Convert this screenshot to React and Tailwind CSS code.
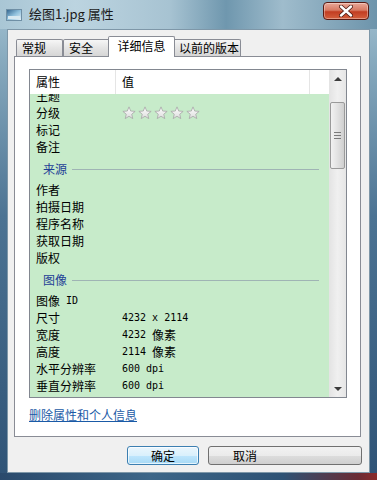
import React from "react";

const cjk = "font-['Noto_Sans_CJK_SC','Noto_Sans',sans-serif]";
const mono = "font-['DejaVu_Sans_Mono',monospace]";

function Star() {
  return (
    <svg width="14" height="14" viewBox="0 0 24 24">
      <defs>
        <linearGradient id="sg" x1="0" y1="0" x2="0" y2="1">
          <stop offset="0" stopColor="#ffffff" />
          <stop offset="1" stopColor="#dcdcdc" />
        </linearGradient>
      </defs>
      <polygon
        points="12,1.5 14.9,8.6 22.5,9.2 16.7,14.1 18.5,21.6 12,17.6 5.5,21.6 7.3,14.1 1.5,9.2 9.1,8.6"
        fill="url(#sg)"
        stroke="#a8a8a8"
        strokeWidth="1.4"
        strokeLinejoin="round"
      />
    </svg>
  );
}

function Row({ label, value, stars }) {
  return (
    <div className="h-[17px] flex items-center">
      <div className="w-[86px] pl-[6px] text-[12px] leading-none text-black">{label}</div>
      <div className="pl-[6px] flex items-center text-black">
        {stars && (
          <div className="flex gap-[2px]">
            <Star />
            <Star />
            <Star />
            <Star />
            <Star />
          </div>
        )}
        {value}
      </div>
    </div>
  );
}

function Section({ title }) {
  return (
    <div className="h-[26px] flex items-center pl-[13px] pr-[10px] pt-[2px]">
      <span className="text-[12px] leading-none text-[#1f3f96]">{title}</span>
      <div className="flex-1 h-px bg-[#9fb4b4] ml-[5px]" />
    </div>
  );
}

function Num({ n, unit }) {
  return (
    <span className="flex items-center">
      <span className={`${mono} text-[10px] leading-none`}>{n}</span>
      {unit && <span className="text-[12px] leading-none ml-[6px]">{unit}</span>}
    </span>
  );
}

function Tab({ label, active, w }) {
  if (active) {
    return (
      <div
        className={`${w} h-[21px] -mb-px -mx-[2px] z-10 bg-white border border-b-0 border-[#898c95] rounded-t-[2px] flex items-center justify-center text-[12px] leading-none pb-[2px]`}
      >
        {label}
      </div>
    );
  }
  return (
    <div
      className={`${w} h-[17px] bg-[linear-gradient(180deg,#f6f6f6,#e4e4e4_50%,#d6d6d6)] border border-b-0 border-[#898c95] rounded-t-[2px] flex items-center pl-[5px] text-[12px] leading-none`}
    >
      {label}
    </div>
  );
}

export default function App() {
  return (
    <div
      className={`${cjk} w-[377px] h-[480px] overflow-hidden flex flex-col bg-[linear-gradient(180deg,#a5c2d2_0%,#88abbf_12%,#4c7393_45%,#2f5376_100%)]`}
    >
      {/* title bar */}
      <div className="h-[29px] flex items-start bg-[linear-gradient(90deg,#a9c6d5_0%,#bcd4e0_20%,#a7c3d2_45%,#6f97ae_60%,#9fbccc_75%,#6d94ab_100%)]">
        <svg className="ml-[6px] mt-[9px]" width="16" height="12" viewBox="0 0 16 12">
          <defs>
            <linearGradient id="ig" x1="0" y1="0" x2="1" y2="1">
              <stop offset="0" stopColor="#2d5f8a" />
              <stop offset="0.5" stopColor="#8fc0dc" />
              <stop offset="1" stopColor="#e9f4fa" />
            </linearGradient>
          </defs>
          <rect x="0.5" y="0.5" width="15" height="11" fill="url(#ig)" stroke="#6f8fa5" />
          <rect x="2" y="7" width="12" height="3" fill="#d7e8f0" />
        </svg>
        <span className="ml-[7px] mt-[6px] text-[13px] leading-[16px] text-[#1b1b1b]">绘图1.jpg 属性</span>
        <div className="ml-auto mr-[8px] mt-[2px] w-[46px] h-[18px] rounded-[4px] border border-[#5a1a12] bg-[linear-gradient(180deg,#e9a898_0%,#d77a63_45%,#c23d22_55%,#d4603e_100%)] flex items-center justify-center shadow-[inset_0_0_0_1px_rgba(255,255,255,0.35)]">
          <svg width="14" height="12" viewBox="0 0 14 12">
            <path d="M2 1.5 L12 10.5 M12 1.5 L2 10.5" stroke="#4a1810" strokeWidth="4" strokeLinecap="round" />
            <path d="M2 1.5 L12 10.5 M12 1.5 L2 10.5" stroke="#ffffff" strokeWidth="2.4" strokeLinecap="round" />
          </svg>
        </div>
      </div>

      {/* client area */}
      <div className="mx-[7px] h-[444px] bg-[#f0f0f0] border border-[#7e97a8] flex flex-col text-black">
        <div className="h-[26px] flex items-end pl-[8px]">
          <Tab label="常规" w="w-[47px]" />
          <Tab label="安全" w="w-[47px]" />
          <Tab label="详细信息" w="w-[67px]" active />
          <Tab label="以前的版本" w="w-[68px]" />
        </div>

        <div className="ml-[6px] w-[347px] h-[381px] bg-white border border-[#898c95] pt-[12px] pl-[14px]">
          <div className="w-[318px] h-[329px] border border-[#828790] flex">
            <div className="flex-1 flex flex-col">
              <div className="h-[24px] bg-white flex items-center text-[12px] leading-none">
                <div className="w-[86px] h-full pl-[6px] flex items-center border-r border-[#e5e5e5]">属性</div>
                <div className="w-[194px] h-full pl-[6px] flex items-center border-r border-[#e5e5e5]">值</div>
              </div>
              <div className="h-[303px] overflow-hidden bg-[#c7ebca]">
                <div className="-mt-[7px]">
                  <Row label="主题" />
                  <Row label="分级" stars />
                  <Row label="标记" />
                  <Row label="备注" />
                  <Section title="来源" />
                  <Row label="作者" />
                  <Row label="拍摄日期" />
                  <Row label="程序名称" />
                  <Row label="获取日期" />
                  <Row label="版权" />
                  <Section title="图像" />
                  <Row
                    label={
                      <span className="flex items-center">
                        图像<span className={`${mono} text-[10px] ml-[6px]`}>ID</span>
                      </span>
                    }
                  />
                  <Row label="尺寸" value={<Num n="4232 x 2114" />} />
                  <Row label="宽度" value={<Num n="4232" unit="像素" />} />
                  <Row label="高度" value={<Num n="2114" unit="像素" />} />
                  <Row label="水平分辨率" value={<Num n="600 dpi" />} />
                  <Row label="垂直分辨率" value={<Num n="600 dpi" />} />
                  <Row label="位深度" value={<Num n="24" />} />
                </div>
              </div>
            </div>
            {/* scrollbar */}
            <div className="w-[17px] h-full bg-[linear-gradient(90deg,#e3e3e3,#f0f0f0_50%,#e6e6e6)] flex flex-col items-center">
              <div className="h-[17px] flex items-center justify-center">
                <div className="w-0 h-0 border-l-[4px] border-r-[4px] border-b-[4px] border-l-transparent border-r-transparent border-b-[#3c3c3c]" />
              </div>
              <div className="mt-[15px] w-[15px] h-[67px] rounded-[2px] border border-[#9a9a9a] bg-[linear-gradient(90deg,#f2f2f2,#e2e2e2_50%,#cfcfcf)] flex flex-col items-center justify-center gap-[2px]">
                <div className="w-[7px] h-px bg-[#7a7a7a]" />
                <div className="w-[7px] h-px bg-[#7a7a7a]" />
                <div className="w-[7px] h-px bg-[#7a7a7a]" />
              </div>
              <div className="mt-auto h-[17px] flex items-center justify-center">
                <div className="w-0 h-0 border-l-[4px] border-r-[4px] border-t-[4px] border-l-transparent border-r-transparent border-t-[#3c3c3c]" />
              </div>
            </div>
          </div>
          <div className="mt-[9px] text-[12px] leading-[16px] text-[#1a5aa6] underline">删除属性和个人信息</div>
        </div>

        <div className="mt-[9px] flex pl-[119px] gap-[9px]">
          <div className="w-[72px] h-[19px] rounded-[3px] border border-[#3c7fb1] bg-[linear-gradient(180deg,#eaf6fd_0%,#d9f0fc_50%,#bee6fd_51%,#a7d9f5_100%)] flex items-center justify-center text-[12px] leading-none shadow-[inset_0_0_0_1px_rgba(255,255,255,0.7)]">
            确定
          </div>
          <div className="w-[154px] h-[19px] rounded-[3px] border border-[#707070] bg-[linear-gradient(180deg,#f2f2f2_0%,#ebebeb_50%,#dddddd_51%,#cfcfcf_100%)] flex items-center text-[12px] leading-none">
            <span className="w-[72px] text-center">取消</span>
          </div>
        </div>
      </div>

      <div className="h-[7px] bg-[linear-gradient(90deg,#2a4a6c_0%,#3d6688_40%,#2e5274_75%,#6b2b34_95%,#8a2b2b_100%)]" />
    </div>
  );
}
